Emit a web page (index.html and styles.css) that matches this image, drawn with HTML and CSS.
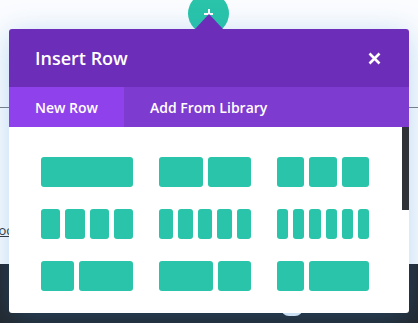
FILE: index.html
```html
<!DOCTYPE html>
<html lang="en">
<head>
    <meta charset="UTF-8">
    <meta name="viewport" content="width=device-width, initial-scale=1.0">
    <title>Insert Row</title>
    <link rel="stylesheet" href="styles.css">
</head>
<body>
    <div class="page">
        <div class="canvas">
            <div class="rule"></div>
            <a class="doc-link" href="#">Docs</a>
        </div>
        <div class="footer-bar">
            <span class="pill"></span>
        </div>

        <button class="add-btn" aria-label="Add row">
            <span class="plus"></span>
        </button>

        <div class="modal">
            <div class="modal-head">
                <h2 class="modal-title">Insert Row</h2>
                <svg class="close" width="13" height="13" viewBox="0 0 13 13">
                    <path d="M1.5 1.5 L11.5 11.5 M11.5 1.5 L1.5 11.5" stroke="#fff" stroke-width="2.6" fill="none"/>
                </svg>
            </div>
            <div class="tabs">
                <div class="tab active">New Row</div>
                <div class="tab">Add From Library</div>
            </div>
            <div class="modal-body">
                <!-- row 1 -->
                <div class="layout"><span class="col"></span></div>
                <div class="layout"><span class="col"></span><span class="col"></span></div>
                <div class="layout"><span class="col"></span><span class="col"></span><span class="col"></span></div>
                <!-- row 2 -->
                <div class="layout"><span class="col"></span><span class="col"></span><span class="col"></span><span class="col"></span></div>
                <div class="layout"><span class="col"></span><span class="col"></span><span class="col"></span><span class="col"></span><span class="col"></span></div>
                <div class="layout"><span class="col"></span><span class="col"></span><span class="col"></span><span class="col"></span><span class="col"></span><span class="col"></span></div>
                <!-- row 3 -->
                <div class="layout"><span class="col third"></span><span class="col"></span></div>
                <div class="layout"><span class="col"></span><span class="col third"></span></div>
                <div class="layout"><span class="col quarter"></span><span class="col"></span></div>

                <div class="scrollbar"></div>
            </div>
        </div>
    </div>
</body>
</html>
```

FILE: styles.css
```css
*{
    padding: 0;
    margin: 0;
    box-sizing: border-box;
}
body{
    font-family: "Open Sans", "Liberation Sans", sans-serif;
    background: #fbfcfe;
    overflow: hidden;
}
.page{
    position: relative;
    width: 418px;
    height: 323px;
    display: flex;
    flex-direction: column;
}

/* page behind the modal */
.canvas{
    height: 264px;
    padding-top: 107px;
    background: #fbfcfe;
}
.rule{
    height: 1px;
    background: #7d7f83;
}
.doc-link{
    display: block;
    margin-top: 114px;
    margin-left: -11px;
    font-size: 13px;
    line-height: 16px;
    color: #333;
}
.footer-bar{
    flex: 1;
    background: #23272c;
}
.pill{
    display: block;
    width: 22px;
    height: 16px;
    margin: 36px 0 0 281px;
    background: #eef3f8;
    border-radius: 0 0 8px 8px;
}

/* round add button */
.add-btn{
    position: absolute;
    left: 188px;
    top: -7px;
    width: 41px;
    height: 41px;
    border: none;
    border-radius: 50%;
    background: #29c4a9;
}
.plus{
    position: absolute;
    left: 16px;
    top: 16px;
    width: 9px;
    height: 9px;
}
.plus::before,
.plus::after{
    content: "";
    position: absolute;
    background: #fff;
}
.plus::before{
    left: 0;
    top: 3.5px;
    width: 9px;
    height: 2px;
}
.plus::after{
    left: 3.5px;
    top: 0;
    width: 2px;
    height: 9px;
}

/* modal */
.modal{
    position: absolute;
    left: 9px;
    top: 29px;
    width: 400px;
    background: #fff;
    border-radius: 3px;
    box-shadow: 0 5px 30px rgba(43, 135, 218, 0.3);
}
.modal::before{
    content: "";
    position: absolute;
    left: 186px;
    top: -15px;
    border-left: 14px solid transparent;
    border-right: 14px solid transparent;
    border-bottom: 15px solid #6c2eb9;
}
.modal-head{
    height: 58px;
    display: flex;
    align-items: center;
    justify-content: space-between;
    padding: 0 28px 0 26px;
    background: #6c2eb9;
    border-radius: 3px 3px 0 0;
}
.modal-title{
    font-size: 18px;
    font-weight: 600;
    color: #fff;
}
.close{
    display: block;
}
.tabs{
    height: 40px;
    display: flex;
    background: #7e3bd0;
}
.tab{
    display: flex;
    align-items: center;
    padding: 0 26px;
    font-size: 14px;
    font-weight: 600;
    color: #fff;
}
.tab.active{
    background: #8f42ec;
}
.modal-body{
    position: relative;
    height: 186px;
    padding: 30px 0 0 32px;
    display: grid;
    grid-template-columns: repeat(3, 92px);
    grid-auto-rows: 30px;
    column-gap: 26px;
    row-gap: 22px;
    align-content: start;
}
.layout{
    display: flex;
    gap: 5px;
}
.col{
    flex: 1;
    background: #29c4a9;
    border-radius: 3px;
}
.col.third{
    flex: 0 0 33px;
}
.col.quarter{
    flex: 0 0 27px;
}
.scrollbar{
    position: absolute;
    top: 0;
    right: 0;
    width: 7px;
    height: 83px;
    background: #2f3338;
}
```
